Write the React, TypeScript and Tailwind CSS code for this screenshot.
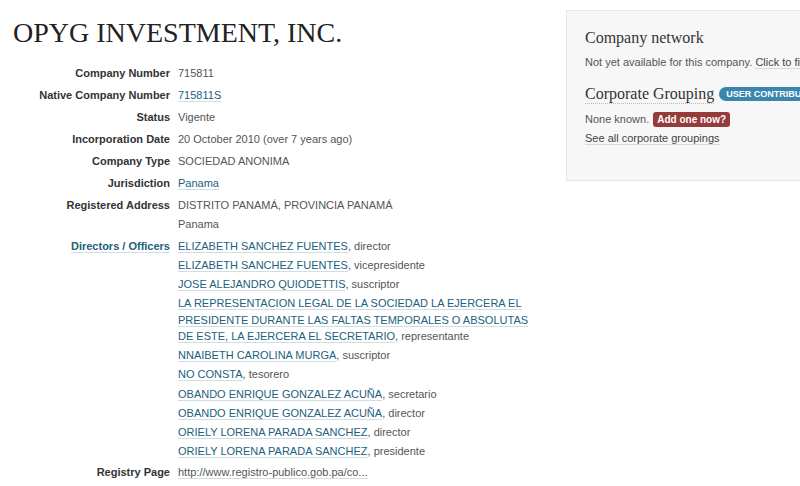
import React from "react";

const sans = { fontFamily: '"Liberation Sans", Arial, sans-serif' };
const serif = { fontFamily: '"Liberation Serif", "Times New Roman", serif' };

type Officer = { name: string; role: string };

const officers: Officer[] = [
  { name: "ELIZABETH SANCHEZ FUENTES", role: "director" },
  { name: "ELIZABETH SANCHEZ FUENTES", role: "vicepresidente" },
  { name: "JOSE ALEJANDRO QUIODETTIS", role: "suscriptor" },
  {
    name: "LA REPRESENTACION LEGAL DE LA SOCIEDAD LA EJERCERA EL PRESIDENTE DURANTE LAS FALTAS TEMPORALES O ABSOLUTAS DE ESTE, LA EJERCERA EL SECRETARIO",
    role: "representante",
  },
  { name: "NNAIBETH CAROLINA MURGA", role: "suscriptor" },
  { name: "NO CONSTA", role: "tesorero" },
  { name: "OBANDO ENRIQUE GONZALEZ ACUÑA", role: "secretario" },
  { name: "OBANDO ENRIQUE GONZALEZ ACUÑA", role: "director" },
  { name: "ORIELY LORENA PARADA SANCHEZ", role: "director" },
  { name: "ORIELY LORENA PARADA SANCHEZ", role: "presidente" },
];

function Link({ children, className = "" }: { children: React.ReactNode; className?: string }) {
  return (
    <a className={`text-[#22617c] border-b border-[#cfdde4] ${className}`}>{children}</a>
  );
}

function Row({
  label,
  children,
  labelClass = "text-[#333]",
}: {
  label: React.ReactNode;
  children: React.ReactNode;
  labelClass?: string;
}) {
  return (
    <div className="flex mb-[5px] leading-[17px]">
      <div className={`w-[157px] shrink-0 text-right font-bold ${labelClass}`}>{label}</div>
      <div className="ml-2 flex-1 text-[#555]">{children}</div>
    </div>
  );
}

export default function App() {
  return (
    <div className="w-[800px] h-[486px] overflow-hidden bg-white text-[11px]" style={sans}>
      <div className="flex pt-[10px]">
        <div className="w-[566px] shrink-0 pl-[13px]">
          <h1 className="mt-[6px] mb-[15px] text-[28px] leading-[34px] text-[#222]" style={serif}>
            OPYG INVESTMENT, INC.
          </h1>
          <Row label="Company Number">715811</Row>
          <Row label="Native Company Number">
            <Link>715811S</Link>
          </Row>
          <Row label="Status">Vigente</Row>
          <Row label="Incorporation Date">20 October 2010 (over 7 years ago)</Row>
          <Row label="Company Type">SOCIEDAD ANONIMA</Row>
          <Row label="Jurisdiction">
            <Link>Panama</Link>
          </Row>
          <Row label="Registered Address">
            <div className="flex flex-col gap-[2px]">
              <div>DISTRITO PANAMÁ, PROVINCIA PANAMÁ</div>
              <div>Panama</div>
            </div>
          </Row>
          <Row label={<Link>Directors / Officers</Link>} labelClass="text-[#22617c]">
            <ul className="flex flex-col gap-[2.6px] w-[362px]">
              {officers.map((o, i) => (
                <li key={i} className="leading-[16.5px]">
                  <Link>{o.name}</Link>, {o.role}
                </li>
              ))}
            </ul>
          </Row>
          <Row label="Registry Page">
            <a className="text-[#555] border-b border-[#cfdde4]">
              http://www.registro-publico.gob.pa/co...
            </a>
          </Row>
        </div>

        <div className="w-[300px] shrink-0 h-[171px] bg-[#f7f7f7] border border-[#e6e6e6] pl-[18px] pt-[17px] whitespace-nowrap">
          <h3 className="text-[16px] leading-[20px] text-[#333]" style={serif}>
            Company network
          </h3>
          <p className="mt-[6px] leading-[16px] text-[#555]">
            Not yet available for this company.{" "}
            <a className="text-[#444] border-b border-[#cfdde4]">Click to find out more</a>
          </p>
          <div className="mt-[14px] flex items-center leading-[20px]">
            <h3
              className="text-[16px] text-[#333] border-b border-dotted border-[#bbb] leading-[19px]"
              style={serif}
            >
              Corporate Grouping
            </h3>
            <span className="ml-[5px] rounded-full bg-[#3a87ad] px-[7px] text-[9px] font-bold leading-[14px] text-white uppercase">
              User contributed
            </span>
          </div>
          <p className="mt-[7px] flex items-center leading-[17px] text-[#555]">
            None known.
            <span className="ml-[4px] rounded-[3px] bg-[#953b39] px-[4px] text-[10px] font-bold leading-[15px] text-white">
              Add one now?
            </span>
          </p>
          <p className="mt-[2px] leading-[16px]">
            <a className="text-[#444] border-b border-[#cfdde4]">See all corporate groupings</a>
          </p>
        </div>
      </div>
    </div>
  );
}
